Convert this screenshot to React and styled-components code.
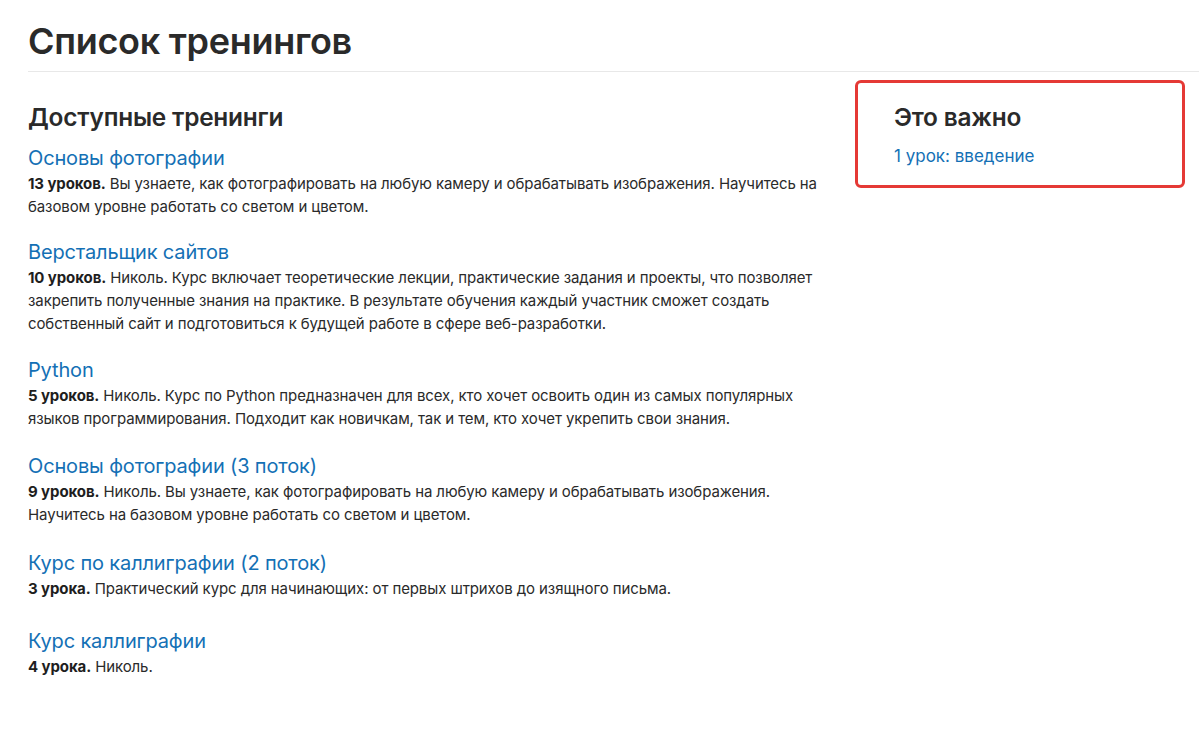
import React from "react";
import styled, { createGlobalStyle } from "styled-components";

const GlobalStyle = createGlobalStyle`
  html, body { margin: 0; padding: 0; background: #ffffff; }
  body {
    font-family: "Inter", "Noto Sans", "Liberation Sans", sans-serif;
    color: #222222;
    -webkit-font-smoothing: antialiased;
  }
  * { box-sizing: border-box; }
`;

const Page = styled.div`
  padding-left: 28px;
`;

const Header = styled.header`
  padding-top: 20px;
  padding-bottom: 8px;
  border-bottom: 1px solid #e8e8e8;
`;

const PageTitle = styled.h1`
  margin: 0;
  font-size: 36px;
  line-height: 43px;
  font-weight: 600;
  letter-spacing: -0.3px;
  color: #2a2a2a;
`;

const Layout = styled.div`
  display: flex;
  align-items: flex-start;
  gap: 30px;
  margin-top: 8px;
`;

const Main = styled.main`
  width: 797px;
  padding-top: 22px;
`;

const SectionTitle = styled.h2`
  margin: 0 0 12px;
  font-size: 24.4px;
  line-height: 30px;
  font-weight: 600;
  letter-spacing: -0.2px;
  color: #2a2a2a;
`;

const Item = styled.div`
  margin-bottom: ${(p) => p.$gap}px;
`;

const ItemLink = styled.a`
  display: block;
  font-size: 20px;
  line-height: 28px;
  font-weight: 400;
  color: #1470b5;
  text-decoration: none;
  letter-spacing: -0.15px;
`;

const Desc = styled.p`
  margin: 0;
  font-size: 15px;
  line-height: 23px;
  color: #2a2a2a;
  letter-spacing: -0.1px;
`;

const Count = styled.strong`
  font-weight: 700;
  color: #1e1e1e;
`;

const Aside = styled.aside`
  width: 330px;
  border: 3px solid #e53935;
  border-radius: 6px;
  padding: 19px 36px 17px;
`;

const AsideLink = styled.a`
  display: block;
  font-size: 17px;
  line-height: 24px;
  color: #1470b5;
  text-decoration: none;
`;

const trainings = [
  {
    title: "Основы фотографии",
    count: "13 уроков.",
    text: " Вы узнаете, как фотографировать на любую камеру и обрабатывать изображения. Научитесь на базовом уровне работать со светом и цветом.",
    gap: 20,
  },
  {
    title: "Верстальщик сайтов",
    count: "10 уроков.",
    text: " Николь. Курс включает теоретические лекции, практические задания и проекты, что позволяет закрепить полученные знания на практике. В результате обучения каждый участник сможет создать собственный сайт и подготовиться к будущей работе в сфере веб-разработки.",
    gap: 21,
  },
  {
    title: "Python",
    count: "5 уроков.",
    text: " Николь. Курс по Python предназначен для всех, кто хочет освоить один из самых популярных языков программирования. Подходит как новичкам, так и тем, кто хочет укрепить свои знания.",
    gap: 22,
  },
  {
    title: "Основы фотографии (3 поток)",
    count: "9 уроков.",
    text: " Николь. Вы узнаете, как фотографировать на любую камеру и обрабатывать изображения. Научитесь на базовом уровне работать со светом и цветом.",
    gap: 23,
  },
  {
    title: "Курс по каллиграфии (2 поток)",
    count: "3 урока.",
    text: " Практический курс для начинающих: от первых штрихов до изящного письма.",
    gap: 27,
  },
  {
    title: "Курс каллиграфии",
    count: "4 урока.",
    text: " Николь.",
    gap: 20,
  },
];

export default function App() {
  return (
    <>
      <GlobalStyle />
      <Page>
        <Header>
          <PageTitle>Список тренингов</PageTitle>
        </Header>
        <Layout>
          <Main>
            <SectionTitle>Доступные тренинги</SectionTitle>
            {trainings.map((t) => (
              <Item key={t.title} $gap={t.gap}>
                <ItemLink href="#">{t.title}</ItemLink>
                <Desc>
                  <Count>{t.count}</Count>
                  {t.text}
                </Desc>
              </Item>
            ))}
          </Main>
          <Aside>
            <SectionTitle>Это важно</SectionTitle>
            <AsideLink href="#">1 урок: введение</AsideLink>
          </Aside>
        </Layout>
      </Page>
    </>
  );
}
